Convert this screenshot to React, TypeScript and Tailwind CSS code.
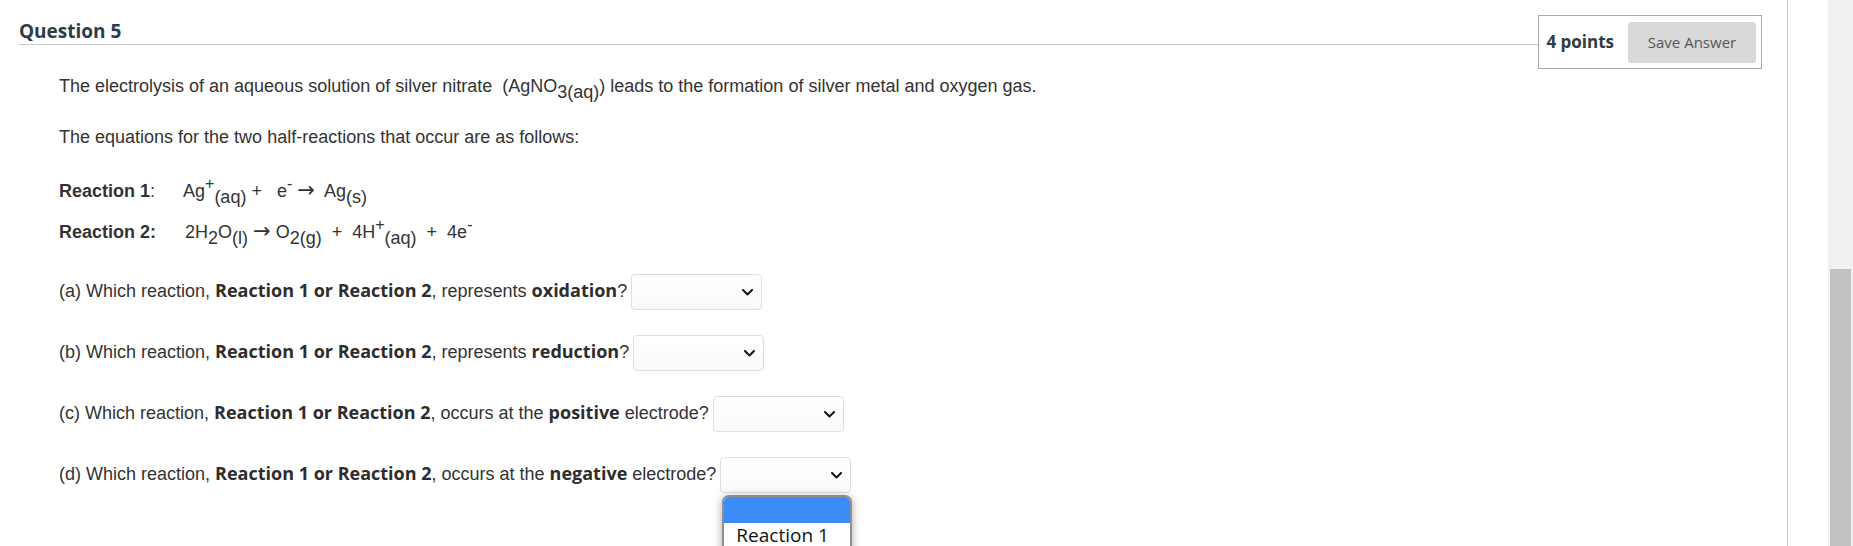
import React from 'react';

const Sub = ({ children }: { children: React.ReactNode }) => (
  <span className="relative top-[6px] text-[18px]">{children}</span>
);

const Sup = ({ children }: { children: React.ReactNode }) => (
  <span className="relative -top-[8px] text-[16px]">{children}</span>
);

const Arrow = () => (
  <span className="font-['DejaVu_Sans',sans-serif] text-[21px] leading-[0px]">→</span>
);

const B = ({ children }: { children: React.ReactNode }) => (
  <strong className="font-['Open_Sans',sans-serif] font-bold text-[#2d2d2d]">{children}</strong>
);

const Chevron = () => (
  <svg width="11" height="7" viewBox="0 0 11 7" className="block">
    <path d="M1 1l4.5 4.5L10 1" stroke="#111" strokeWidth="2" fill="none" strokeLinecap="round" strokeLinejoin="round" />
  </svg>
);

const Select = ({ open = false }: { open?: boolean }) => (
  <div className="relative ml-[4px] flex h-[36px] w-[131px] items-center justify-end rounded-[4px] border border-[#dedede] bg-linear-to-b from-white to-[#fafafa] pr-[8px]">
    <Chevron />
    {open && (
      <div className="absolute left-[1px] top-[37px] h-[90px] w-[130px] overflow-hidden rounded-t-[7px] border-2 border-[#8f8f8f] bg-white shadow-[0_2px_10px_rgba(0,0,0,0.35)]">
        <div className="h-[26px] bg-[#3b8cf7]" />
        <div className="pl-[12px] font-['Open_Sans',sans-serif] text-[19px] leading-[24px] text-[#111]">
          Reaction 1
        </div>
      </div>
    )}
  </div>
);

const questions = [
  { label: '(a)', tail: ', represents ', key: 'oxidation', end: '?', mt: 'mt-[31px]' },
  { label: '(b)', tail: ', represents ', key: 'reduction', end: '?', mt: 'mt-[25px]' },
  { label: '(c)', tail: ', occurs at the ', key: 'positive', end: ' electrode?', mt: 'mt-[25px]' },
  { label: '(d)', tail: ', occurs at the ', key: 'negative', end: ' electrode?', mt: 'mt-[25px]' },
];

export default function App() {
  return (
    <div className="flex h-[546px] w-full overflow-hidden bg-white">
      <div className="flex-1 border-r border-[#c8c8c8]">
        {/* header */}
        <div className="flex items-start pl-[19px] pr-[25px] pt-[15px]">
          <div className="h-[30px] flex-1 border-b border-[#c8c8c8]">
            <h2 className="mt-[6px] font-['Open_Sans',sans-serif] text-[19px] font-bold leading-[20px] text-[#2d3b45]">
              Question 5
            </h2>
          </div>
          <div className="flex h-[54px] items-center gap-[14px] border border-[#a9a9a9] pl-[7px] pr-[5px]">
            <span className="font-['Open_Sans',sans-serif] text-[17px] font-bold text-[#2d3b45]">4 points</span>
            <button className="h-[41px] w-[128px] rounded-[3px] bg-[#d9d9d9] font-['Open_Sans',sans-serif] text-[15px] text-[#555]">
              Save Answer
            </button>
          </div>
        </div>

        {/* body */}
        <div className="pl-[59px] pt-[7px] font-['Liberation_Sans',Arial,sans-serif] text-[18px] leading-[20px] text-[#333]">
          <p className="whitespace-pre">
            The electrolysis of an aqueous solution of silver nitrate  (AgNO<Sub>3(aq)</Sub>) leads to the formation of silver metal and oxygen gas.
          </p>
          <p className="mt-[31px]">The equations for the two half-reactions that occur are as follows:</p>

          <div className="mt-[34px] flex whitespace-pre">
            <span className="w-[124px] font-bold">
              Reaction 1<span className="font-normal">:</span>
            </span>
            <span>
              Ag<Sup>+</Sup><Sub>(aq)</Sub> +   e<Sup>-</Sup> <Arrow />  Ag<Sub>(s)</Sub>
            </span>
          </div>
          <div className="mt-[20px] flex whitespace-pre">
            <span className="w-[126px] font-bold">Reaction 2:</span>
            <span>
              2H<Sub>2</Sub>O<Sub>(l)</Sub> <Arrow /> O<Sub>2(g)</Sub>  +  4H<Sup>+</Sup><Sub>(aq)</Sub>  +  4e<Sup>-</Sup>
            </span>
          </div>

          {questions.map((q, i) => (
            <div key={q.label} className={`flex items-center ${q.mt}`}>
              <span className="relative -top-[2px] whitespace-pre">
                {q.label} Which reaction, <B>Reaction 1 or Reaction 2</B>
                {q.tail}
                <B>{q.key}</B>
                {q.end}
              </span>
              <Select open={i === 3} />
            </div>
          ))}
        </div>
      </div>

      {/* right gutter + scrollbar */}
      <div className="w-[40px]" />
      <div className="flex w-[25px] flex-col bg-[#f1f1f1] pl-[2px] pr-[2px]">
        <div className="h-[269px]" />
        <div className="flex-1 bg-[#c1c1c1]" />
      </div>
    </div>
  );
}
